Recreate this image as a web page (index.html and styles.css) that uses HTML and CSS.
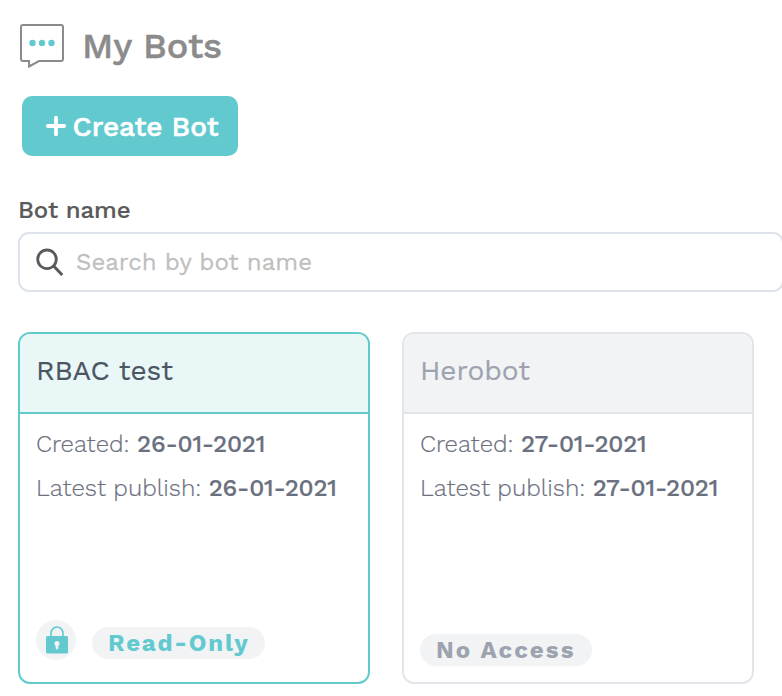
FILE: index.html
```
<!DOCTYPE html>
<html lang="en">
<head>
<meta charset="utf-8">
<title>My Bots</title>
<link rel="stylesheet" href="styles.css">
</head>
<body>
<main class="page">
  <header class="heading">
    <svg class="heading-icon" viewBox="0 0 44 46" width="44" height="46">
      <path d="M3 1H41Q43 1 43 3V35Q43 37 41 37H19L9 42.500V37H3Q1 37 1 35V3Q1 1 3 1Z" fill="none" stroke="#8b8b8b" stroke-width="2"/>
      <g fill="#62cacf"><circle cx="12.5" cy="19" r="3.2"/><circle cx="22" cy="19" r="3.2"/><circle cx="31.5" cy="19" r="3.2"/></g>
    </svg>
    <h1 class="title"><span>My Bots</span></h1>
  </header>
  <button class="create" type="button">
    <svg width="20" height="20" viewBox="0 0 20 20"><path d="M10 1.800V18.200M1.800 10H18.200" stroke="#fff" stroke-width="3.800" stroke-linecap="round"/></svg>
    <span class="create-text">Create Bot</span>
  </button>
  <div class="label"><span>Bot name</span></div>
  <div class="search">
    <svg width="28" height="28" viewBox="0 0 28 28" fill="none" stroke="#5a5a5a" stroke-width="2.8"><circle cx="11" cy="11.300" r="9.3"/><path d="M17.600 18L26.300 27" stroke-width="3"/></svg>
    <span class="placeholder">Search by bot name</span>
  </div>
  <div class="cards">
    <article class="card active">
      <h2 class="card-head">RBAC test</h2>
      <div class="card-body">
        <p><span>Created:</span> <b>26-01-2021</b></p>
        <p><span>Latest publish:</span> <b>26-01-2021</b></p>
      </div>
      <footer class="card-foot">
        <span class="lock">
          <svg width="22" height="28" viewBox="0 0 22 28"><path d="M5 11V7.500a6 6.500 0 0 1 12 0V11" fill="none" stroke="#62cacf" stroke-width="1.600"/><rect y="10" width="22" height="17.500" rx="1.500" fill="#62cacf"/><path d="M11 15a2.600 2.600 0 0 1 1.400 4.800V22a1.400 1.400 0 0 1-2.800 0V19.800A2.600 2.600 0 0 1 11 15Z" fill="#f2f3f5"/></svg>
        </span>
        <span class="badge">Read-Only</span>
      </footer>
    </article>
    <article class="card">
      <h2 class="card-head">Herobot</h2>
      <div class="card-body">
        <p><span>Created:</span> <b>27-01-2021</b></p>
        <p><span>Latest publish:</span> <b>27-01-2021</b></p>
      </div>
      <footer class="card-foot">
        <span class="badge">No Access</span>
      </footer>
    </article>
  </div>
</main>
</body>
</html>
```
FILE: styles.css
```
* { box-sizing: border-box; }
body { margin: 0; background: #fff; overflow: hidden; font-family: "Work Sans", Inter, "Liberation Sans", sans-serif; }
h1, h2, p { margin: 0; }
svg { display: block; flex: none; }
.page { width: 784px; padding: 24px 0 0 18px; white-space: nowrap; }
.heading { display: flex; align-items: flex-start; height: 72px; padding-left: 2px; }
.title { margin-left: 18px; font-size: 36px; line-height: 45px; font-weight: 500; letter-spacing: -.1px; color: #8b8b8b; -webkit-text-stroke: .5px; }
.create { display: flex; align-items: center; width: 216px; height: 60px; margin-left: 4px; padding: 0 0 0 24px; border: 0; border-radius: 10px; background: #62cacf; color: #fff; font: inherit; }
.create-text { margin-left: 6.500px; font-size: 28px; font-weight: 500; -webkit-text-stroke: .5px; }
.label { margin-top: 38px; height: 38px; line-height: 32px; font-size: 24px; font-weight: 500; letter-spacing: -.1px; color: #5a5a5a; -webkit-text-stroke: .2px; }
.search { display: flex; align-items: center; height: 60px; padding-left: 16px; border: 2px solid #dde3ea; border-radius: 11px; }
.placeholder { margin-left: 12px; font-size: 24px; color: #bfbfbf; -webkit-text-stroke: .3px; }
.cards { display: flex; gap: 32px; margin-top: 40px; }
.card { display: flex; flex-direction: column; width: 352px; height: 352px; border: 2px solid #e4e5ea; border-radius: 12px; overflow: hidden; color: #6b7080; }
.card-head { height: 80px; padding-left: 16px; border-bottom: 2px solid #e4e5ea; background: #f2f3f5; font-size: 28px; line-height: 73px; font-weight: 400; color: #9ca3af; -webkit-text-stroke: .2px; }
.card-body { padding: 8px 16px 0; font-size: 24px; line-height: 44px; font-weight: 300; -webkit-text-stroke: .2px; }
.card-body b { font-weight: 500; letter-spacing: -.2px; }
.card-foot { display: flex; align-items: center; gap: 16px; margin-top: auto; padding: 0 16px 16px; }
.badge { display: flex; align-items: center; height: 32px; width: 172px; padding-left: 16px; border-radius: 16px; background: #f2f3f5; font-size: 24px; font-weight: 700; letter-spacing: 2.050px; color: #9ca3af; }
.lock { display: flex; justify-content: center; width: 40px; height: 40px; padding: 6px 0 0 1px; border-radius: 50%; background: #f2f3f5; }
.active { border-color: #62cacf; }
.active .card-head { border-color: #62cacf; background: #e9f7f7; color: #4b5563; }
.active .card-foot { padding-bottom: 22px; }
.active .badge { width: 173px; margin-top: 6px; letter-spacing: 1.800px; color: #62cacf; }
```
